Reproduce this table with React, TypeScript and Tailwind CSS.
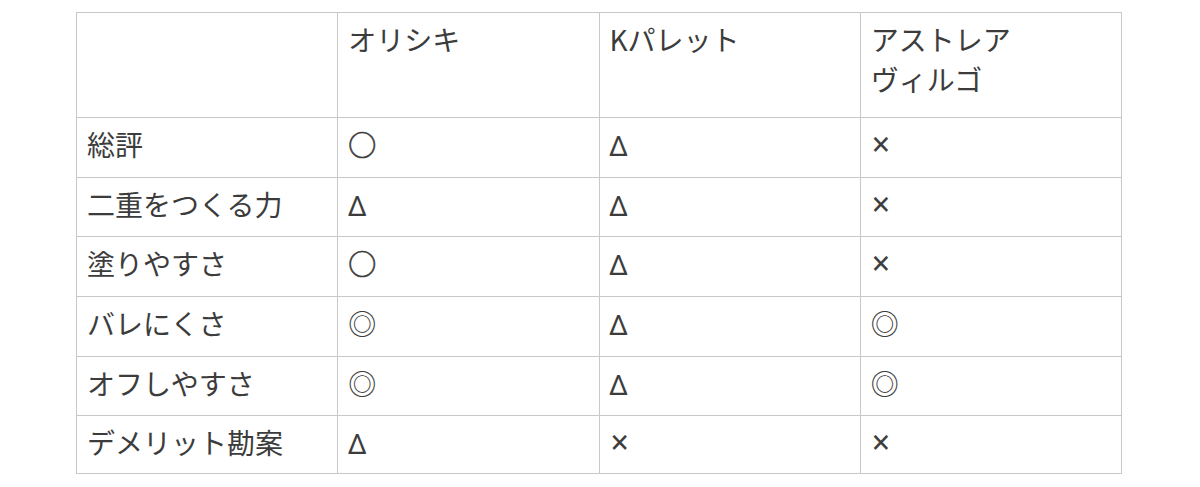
import React from 'react';

const headers = ['', 'オリシキ', 'Kパレット', 'アストレア\nヴィルゴ'];

const rows = [
  ['総評', '○', '△', '×'],
  ['二重をつくる力', '△', '△', '×'],
  ['塗りやすさ', '○', '△', '×'],
  ['バレにくさ', '◎', '△', '◎'],
  ['オフしやすさ', '◎', '△', '◎'],
  ['デメリット勘案', '△', '×', '×'],
];

const heights = ['h-[60px]', 'h-[59px]', 'h-[60px]', 'h-[60px]', 'h-[59px]', 'h-[58px]'];

const cell =
  'border border-[#c8c8c8] px-[10px] pt-[6px] align-top text-left font-normal whitespace-pre-line';

// 記号は元画像の字形に寄せて欧文フォントで描く
const Mark: React.FC<{ v: string }> = ({ v }) => {
  if (v === '△')
    return (
      <span
        className="text-[28px] [-webkit-text-stroke:0.1px_currentColor]"
        style={{ fontFamily: '"Noto Sans", sans-serif' }}
      >
        Δ
      </span>
    );
  if (v === '×')
    return (
      <span
        className="pl-[1px] text-[32px] [-webkit-text-stroke:0.2px_currentColor]"
        style={{ fontFamily: '"Noto Sans", sans-serif' }}
      >
        ×
      </span>
    );
  if (v === '○') return <span className="[-webkit-text-stroke:0.6px_currentColor]">○</span>;
  return <>{v}</>;
};

const App: React.FC = () => {
  return (
    <div
      className="w-[1200px] h-[487px] bg-white pt-[12px] text-[#3c3c3c] text-[28px] leading-[40px]"
      style={{ fontFamily: '"Noto Sans CJK JP", "Noto Sans", sans-serif' }}
    >
      <table className="ml-[76px] w-[1046px] table-fixed border-collapse">
        <thead>
          <tr className="h-[105px]">
            {headers.map((h, i) => (
              <th key={i} className={cell}>
                {h}
              </th>
            ))}
          </tr>
        </thead>
        <tbody>
          {rows.map((row, r) => (
            <tr key={r} className={heights[r]}>
              {row.map((v, c) => (
                <td key={c} className={cell}>
                  {c === 0 ? v : <Mark v={v} />}
                </td>
              ))}
            </tr>
          ))}
        </tbody>
      </table>
    </div>
  );
};

export default App;
